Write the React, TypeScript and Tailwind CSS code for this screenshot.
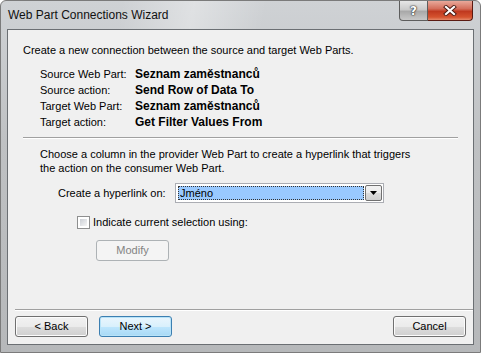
import React from "react";

function WinButton({
    label,
    focused,
    disabled,
}: {
    label: string;
    focused?: boolean;
    disabled?: boolean;
}) {
    if (disabled) {
        return (
            <div className="w-[73px] h-[21px] rounded-[3px] border border-[#adb2b5] bg-[#f4f4f4] flex items-center justify-center text-[#838383]">
                {label}
            </div>
        );
    }
    return (
        <div
            className={
                focused
                    ? "w-[73px] h-[21px] rounded-[3px] border border-[#3c7fb1] shadow-[inset_0_0_0_1px_#b8e3f8] bg-[linear-gradient(to_bottom,#eaf6fd_0%,#d9f0fc_50%,#bee6fd_51%,#a7d9f5_100%)] flex items-center justify-center"
                    : "w-[73px] h-[21px] rounded-[3px] border border-[#707070] shadow-[inset_0_0_0_1px_#fcfcfc] bg-[linear-gradient(to_bottom,#f2f2f2_0%,#ebebeb_50%,#dddddd_51%,#cfcfcf_100%)] flex items-center justify-center"
            }
        >
            {label}
        </div>
    );
}

function Separator({ className }: { className?: string }) {
    return (
        <div className={"h-[2px] border-t border-[#a0a0a0] border-b border-b-white " + (className ?? "")} />
    );
}

const details = [
    ["Source Web Part:", "Seznam zaměstnanců"],
    ["Source action:", "Send Row of Data To"],
    ["Target Web Part:", "Seznam zaměstnanců"],
    ["Target action:", "Get Filter Values From"],
];

export default function App() {
    return (
        <div className="w-[481px] h-[353px] flex flex-col rounded-t-[6px] border border-[#7b7b7b] bg-[linear-gradient(to_bottom,#cfd2d5_0%,#bfc1c3_40%,#b6b8ba_100%)] font-['Liberation_Sans',Arial,sans-serif] text-[11px] text-black overflow-hidden whitespace-nowrap">
            <div className="h-[28px] flex items-start justify-between pl-[7px] pr-[7px] bg-[linear-gradient(100deg,transparent_25%,rgba(255,255,255,0.35)_40%,transparent_55%)]">
                <div className="pt-[5px] text-[12px] text-[#111]">Web Part Connections Wizard</div>
                <div className="flex">
                    <div className="w-[29px] h-[20px] rounded-bl-[4px] border border-t-0 border-[#5d5d5d] bg-[linear-gradient(to_bottom,#e6e6e6_0%,#cacaca_45%,#a9a9a9_55%,#c8c8c8_100%)] flex items-center justify-center">
                        <span className="font-['DejaVu_Sans',sans-serif] font-bold text-[12px] leading-none text-white [text-shadow:0_0_1px_#333,0_0_1px_#333,0_0_2px_#333]">
                            ?
                        </span>
                    </div>
                    <div className="w-[45px] h-[20px] rounded-br-[4px] border border-t-0 border-l-0 border-[#5a1a12] bg-[linear-gradient(to_bottom,#e9a99b_0%,#d46f5c_40%,#c0391f_55%,#d5532f_85%,#e58a6a_100%)] flex items-center justify-center">
                        <svg width="14" height="11" viewBox="0 0 14 11">
                            <path d="M3 2 L11 9 M11 2 L3 9" stroke="#4a1a12" strokeWidth="4" strokeLinecap="square" />
                            <path d="M3 2 L11 9 M11 2 L3 9" stroke="#ffffff" strokeWidth="2.2" strokeLinecap="square" />
                        </svg>
                    </div>
                </div>
            </div>
            <div className="flex-1 mx-[6px] mb-[7px] border border-[#6b6f73] bg-[#f0f0f0] flex flex-col">
                <div className="pl-[15px] pt-[12px] leading-[16px]">
                    Create a new connection between the source and target Web Parts.
                </div>
                <div className="pl-[32px] mt-[8px] leading-[16px] grid grid-cols-[95px_1fr]">
                    {details.map(([label, value]) => (
                        <React.Fragment key={label}>
                            <div>{label}</div>
                            <div className="font-bold text-[12px]">{value}</div>
                        </React.Fragment>
                    ))}
                </div>
                <Separator className="mt-[7px] mx-[15px]" />
                <div className="pl-[32px] mt-[8px] leading-[14px]">
                    Choose a column in the provider Web Part to create a hyperlink that triggers
                    <br />
                    the action on the consumer Web Part.
                </div>
                <div className="flex items-center mt-[8px] pl-[50px]">
                    <div className="w-[117px]">Create a hyperlink on:</div>
                    <div className="w-[209px] h-[20px] border border-[#abadb3] bg-white flex p-[1px]">
                        <div className="flex-1 bg-[#99c9ff] outline-1 outline-dotted outline-[#333] -outline-offset-1 flex items-center pl-[2px] ml-[1px] my-[1px]">
                            Jméno
                        </div>
                        <div className="w-[17px] ml-[1px] border border-[#707070] rounded-[2px] bg-[linear-gradient(to_bottom,#f2f2f2_0%,#ebebeb_50%,#dddddd_51%,#cfcfcf_100%)] flex items-center justify-center">
                            <svg width="7" height="4" viewBox="0 0 7 4">
                                <path d="M0 0 H7 L3.5 4 Z" fill="#000" />
                            </svg>
                        </div>
                    </div>
                </div>
                <div className="flex items-center mt-[11px] pl-[69px]">
                    <div className="w-[13px] h-[13px] border border-[#8e8f8f] bg-white p-[2px]">
                        <div className="w-full h-full bg-[linear-gradient(135deg,#cbcfd5,#f6f6f6)]" />
                    </div>
                    <div className="ml-[3px]">Indicate current selection using:</div>
                </div>
                <div className="mt-[9px] pl-[88px]">
                    <WinButton label="Modify" disabled />
                </div>
                <div className="flex-1" />
                <Separator className="ml-[7px]" />
                <div className="flex items-center px-[7px] pt-[5px] pb-[7px]">
                    <WinButton label="< Back" />
                    <div className="ml-[11px]">
                        <WinButton label="Next >" focused />
                    </div>
                    <div className="flex-1" />
                    <WinButton label="Cancel" />
                </div>
            </div>
        </div>
    );
}
